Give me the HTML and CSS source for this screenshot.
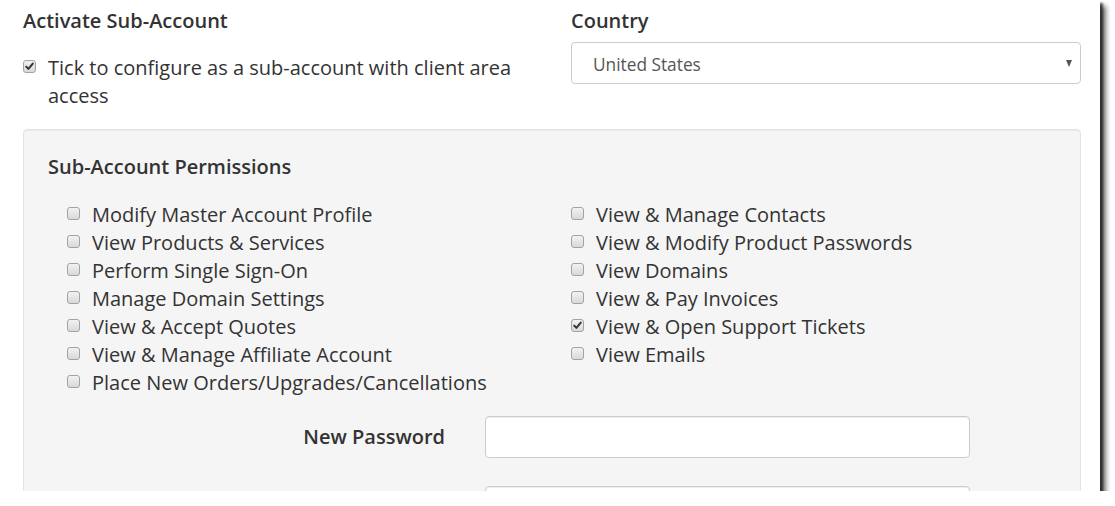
FILE: index.html
```html
<!DOCTYPE html>
<html lang="en">
<head>
<meta charset="utf-8">
<title>Sub-Account</title>
<link rel="stylesheet" href="styles.css">
</head>
<body>
<div class="shot">
  <div class="page">
    <div class="top-row">
      <div class="col">
        <div class="field-label">Activate Sub-Account</div>
        <div class="check-line">
          <span class="cb checked"><svg viewBox="0 0 13 13" width="13" height="13"><path d="M3.2 6.6 L5.4 8.9 L9.8 3.6" fill="none" stroke="#333" stroke-width="2" stroke-linecap="round" stroke-linejoin="round"/></svg></span>
          <span class="check-text">Tick to configure as a sub-account with client area access</span>
        </div>
      </div>
      <div class="col">
        <div class="field-label">Country</div>
        <div class="select"><span class="select-value">United States</span><span class="caret"></span></div>
      </div>
    </div>

    <div class="well">
      <div class="well-title">Sub-Account Permissions</div>
      <div class="perms">
        <div class="perm-col">
          <div class="perm"><span class="cb"></span><span>Modify Master Account Profile</span></div>
          <div class="perm"><span class="cb"></span><span>View Products &amp; Services</span></div>
          <div class="perm"><span class="cb"></span><span>Perform Single Sign-On</span></div>
          <div class="perm"><span class="cb"></span><span>Manage Domain Settings</span></div>
          <div class="perm"><span class="cb"></span><span>View &amp; Accept Quotes</span></div>
          <div class="perm"><span class="cb"></span><span>View &amp; Manage Affiliate Account</span></div>
          <div class="perm"><span class="cb"></span><span>Place New Orders/Upgrades/Cancellations</span></div>
        </div>
        <div class="perm-col">
          <div class="perm"><span class="cb"></span><span>View &amp; Manage Contacts</span></div>
          <div class="perm"><span class="cb"></span><span>View &amp; Modify Product Passwords</span></div>
          <div class="perm"><span class="cb"></span><span>View Domains</span></div>
          <div class="perm"><span class="cb"></span><span>View &amp; Pay Invoices</span></div>
          <div class="perm"><span class="cb checked"><svg viewBox="0 0 13 13" width="13" height="13"><path d="M3.2 6.6 L5.4 8.9 L9.8 3.6" fill="none" stroke="#333" stroke-width="2" stroke-linecap="round" stroke-linejoin="round"/></svg></span><span>View &amp; Open Support Tickets</span></div>
          <div class="perm"><span class="cb"></span><span>View Emails</span></div>
        </div>
      </div>
      <div class="form-row">
        <div class="form-label">New Password</div>
        <div class="input"></div>
      </div>
      <div class="form-row second">
        <div class="form-label"></div>
        <div class="input"></div>
      </div>
    </div>
  </div>
</div>
</body>
</html>
```

FILE: styles.css
```css
html, body {
  margin: 0;
  padding: 0;
  background: #fff;
}

body {
  font-family: "Open Sans", "Liberation Sans", sans-serif;
  font-size: 20px;
  line-height: 28px;
  color: #333;
}

.shot {
  width: 1100px;
  height: 491px;
  overflow: hidden;
  background: #fff;
  box-shadow: 3px 3px 2px rgba(0, 0, 0, 0.6), 6px 6px 5px rgba(0, 0, 0, 0.55);
}

.page {
  width: 1058px;
  margin-left: 23px;
  padding-top: 7px;
}

.top-row {
  display: grid;
  grid-template-columns: 518px 510px;
  column-gap: 30px;
}

.field-label {
  font-weight: 600;
}

.check-line {
  display: flex;
  gap: 12px;
  margin-top: 19px;
}

.cb {
  flex: none;
  display: block;
  width: 13px;
  height: 13px;
  box-sizing: border-box;
  margin-top: 6px;
  border: 1px solid #a3a3a3;
  border-radius: 3px;
  background: linear-gradient(#f2f2f2, #d9d9d9);
  overflow: hidden;
}

.cb svg {
  display: block;
  margin: -1px 0 0 -1px;
}

.select {
  margin-top: 7px;
  height: 42px;
  box-sizing: border-box;
  border: 1px solid #ccc;
  border-radius: 4px;
  background: #fff;
  display: flex;
  align-items: center;
  justify-content: space-between;
  padding: 0 8px 0 21px;
  color: #555;
  font-size: 17.3px;
}

.select-value {
  padding-top: 3px;
}

.caret {
  width: 0;
  height: 0;
  border-left: 3.5px solid transparent;
  border-right: 3.5px solid transparent;
  border-top: 7px solid #555;
  margin-top: 0;
}

.well {
  margin-top: 19px;
  border: 1px solid #e3e3e3;
  border-radius: 4px;
  background: #f5f5f5;
  box-shadow: inset 0 1px 1px rgba(0, 0, 0, 0.05);
  padding: 23px 24px 40px 24px;
}

.well-title {
  font-weight: 600;
}

.perms {
  margin-top: 20px;
  display: grid;
  grid-template-columns: 1fr 1fr;
}

.perm-col {
  padding-left: 19px;
}

.perm {
  display: flex;
  gap: 12px;
}

.form-row {
  margin-top: 19px;
  display: grid;
  grid-template-columns: 397px 485px;
  column-gap: 40px;
  align-items: center;
}

.form-row.second {
  margin-top: 28px;
}

.form-label {
  text-align: right;
  font-weight: 600;
  min-height: 28px;
}

.input {
  height: 42px;
  box-sizing: border-box;
  border: 1px solid #ccc;
  border-radius: 4px;
  background: #fff;
  box-shadow: inset 0 1px 1px rgba(0, 0, 0, 0.075);
}
```
